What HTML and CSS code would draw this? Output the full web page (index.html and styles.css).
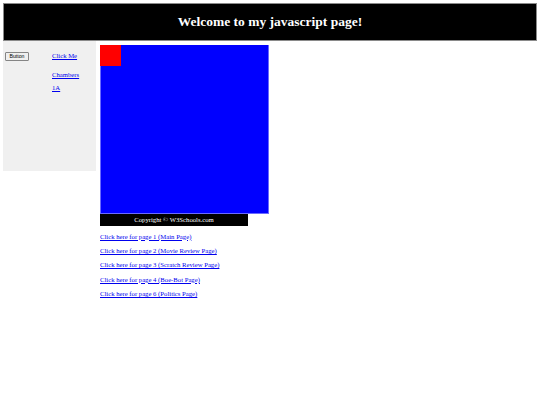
FILE: index.html
```html
<!DOCTYPE html>
<html>
<head>
<meta charset="utf-8">
<link rel="stylesheet" href="styles.css">
</head>
<body>
<div class="page">
  <header class="top">
    <h1 class="title">Welcome to my javascript page!</h1>
  </header>
  <div class="row">
    <aside class="side">
      <button class="btn">Button</button>
      <div class="side-links">
        <a href="#" class="lk first">Click Me</a>
        <a href="#" class="lk second">Chambers</a>
        <a href="#" class="lk third">1A</a>
      </div>
    </aside>
    <main class="main">
      <div class="canvas"><div class="red"></div></div>
      <footer class="foot">Copyright © W3Schools.com</footer>
      <p class="pl"><a href="#">Click here for page 1 (Main Page)</a></p>
      <p class="pl"><a href="#">Click here for page 2 (Movie Review Page)</a></p>
      <p class="pl"><a href="#">Click here for page 3 (Scratch Review Page)</a></p>
      <p class="pl"><a href="#">Click here for page 4 (Boe-Bot Page)</a></p>
      <p class="pl"><a href="#">Click here for page 6 (Politics Page)</a></p>
    </main>
  </div>
</div>
</body>
</html>
```
FILE: styles.css
```css
html, body {
  margin: 0;
  padding: 0;
  background: #ffffff;
  font-family: "Liberation Serif", "Times New Roman", serif;
}
.page {
  padding: 3px;
}
.top {
  box-sizing: border-box;
  height: 38px;
  width: 534px;
  background: #000000;
  border: 1px solid #8a8a8a;
  display: flex;
  align-items: center;
  justify-content: center;
}
.title {
  margin: 0;
  color: #ffffff;
  font-size: 13.5px;
  font-weight: bold;
  line-height: 1;
}
.row {
  display: flex;
  align-items: flex-start;
}
.side {
  box-sizing: border-box;
  width: 93px;
  height: 130px;
  background: #f0f0f0;
  display: flex;
  align-items: flex-start;
  padding: 11px 0 0 2px;
}
.btn {
  box-sizing: border-box;
  width: 24px;
  height: 9px;
  padding: 0;
  font-family: "Liberation Sans", Arial, sans-serif;
  font-size: 5.2px;
  line-height: 1;
  color: #000;
  background: #efefef;
  border: 1px solid #858585;
  border-radius: 1px;
}
.side-links {
  display: flex;
  flex-direction: column;
  margin-left: 23px;
}
.lk {
  font-size: 6.7px;
  line-height: 8px;
  color: #0000ee;
}
.first { margin-top: 0; }
.second { margin-top: 11px; }
.third { margin-top: 5px; }
.main {
  margin: 4px 0 0 4px;
  display: flex;
  flex-direction: column;
  align-items: flex-start;
}
.canvas {
  box-sizing: border-box;
  width: 169px;
  height: 169px;
  background: #0000ff;
  border: 1px solid #6a6aff;
  border-top: none;
  position: relative;
}
.red {
  width: 21px;
  height: 21px;
  background: #ff0000;
  margin-left: -1px;
}
.foot {
  width: 148px;
  height: 12px;
  background: #000000;
  color: #ffffff;
  font-size: 6.7px;
  line-height: 12px;
  text-align: center;
}
.pl {
  margin: 6.7px 0 0 0;
  font-size: 6.7px;
  line-height: 7.7px;
}
.pl a {
  color: #0000ee;
}
```
